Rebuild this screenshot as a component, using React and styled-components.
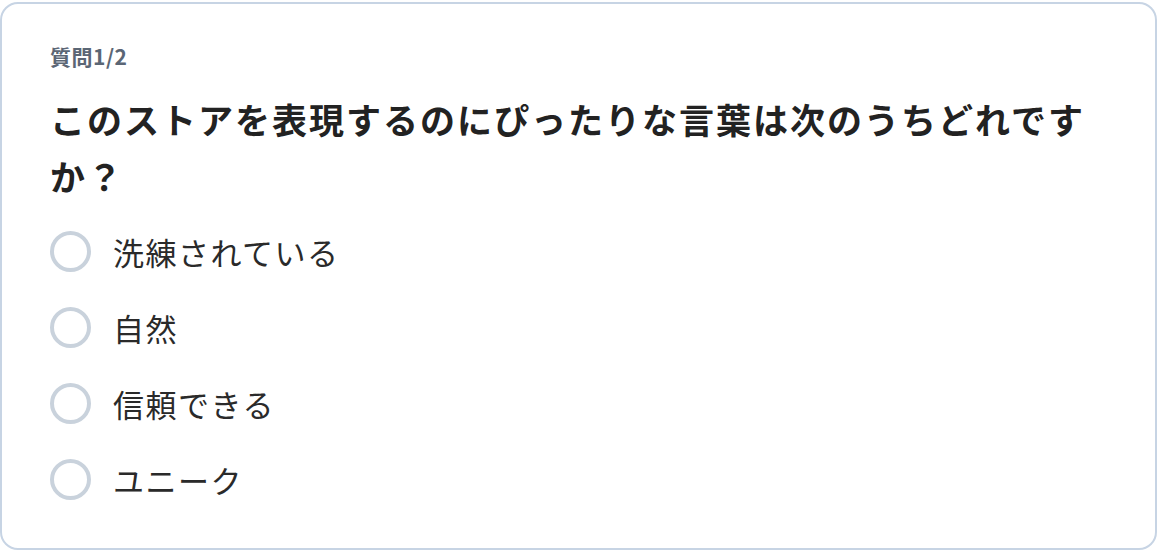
import React from "react";
import styled, { createGlobalStyle } from "styled-components";

const Global = createGlobalStyle`
  html, body { margin: 0; padding: 0; background: #ffffff; }
  body { font-family: "Noto Sans CJK JP", "Noto Sans", sans-serif; }
  * { box-sizing: border-box; }
`;

const Page = styled.div`
  padding: 2px 1px 1px 0;
`;

const Card = styled.section`
  height: 548px;
  border: 2px solid #c7d4e4;
  border-radius: 18px;
  background: #ffffff;
  padding: 37px 48px 0 48px;
  display: flex;
  flex-direction: column;
`;

const Label = styled.div`
  font-size: 21px;
  line-height: 30px;
  font-weight: 700;
  color: #5b6675;
  letter-spacing: 0.5px;
`;

const Title = styled.h2`
  margin: 19px 0 0 0;
  font-size: 35px;
  line-height: 57px;
  font-weight: 700;
  color: #222222;
  letter-spacing: 2px;
`;

const Options = styled.div`
  margin-top: 27px;
  display: flex;
  flex-direction: column;
  gap: 35px;
`;

const Option = styled.label`
  display: flex;
  align-items: center;
  gap: 22px;
  cursor: pointer;
`;

const Radio = styled.span`
  width: 41px;
  height: 41px;
  border-radius: 50%;
  border: 4px solid #c9d2dc;
  flex: none;
`;

const OptionText = styled.span`
  font-size: 31px;
  line-height: 40px;
  color: #2a2a2a;
  letter-spacing: 1.5px;
`;

const options = ["洗練されている", "自然", "信頼できる", "ユニーク"];

export default function App() {
  return (
    <Page>
      <Global />
      <Card>
        <Label>質問1/2</Label>
        <Title>このストアを表現するのにぴったりな言葉は次のうちどれですか？</Title>
        <Options>
          {options.map((o) => (
            <Option key={o}>
              <Radio />
              <OptionText>{o}</OptionText>
            </Option>
          ))}
        </Options>
      </Card>
    </Page>
  );
}
